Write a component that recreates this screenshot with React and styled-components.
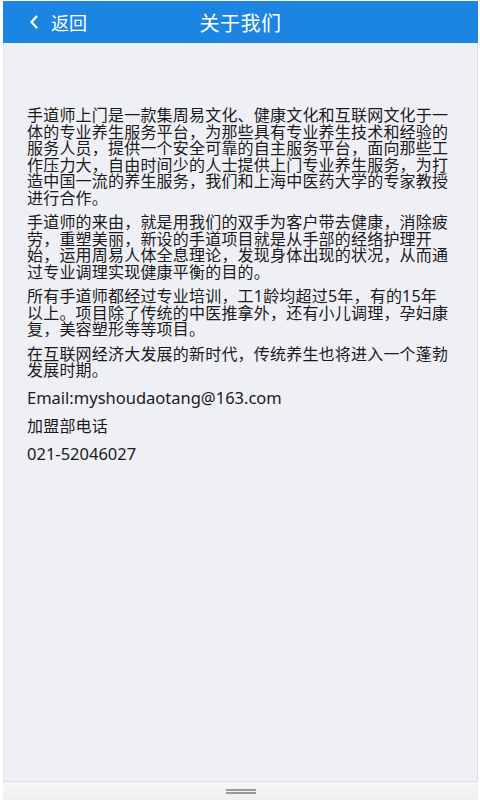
import styled, { createGlobalStyle } from "styled-components"

const GlobalStyle = createGlobalStyle`
  html, body {
    margin: 0;
    padding: 0;
    background: #ffffff;
  }
  body {
    font-family: "Noto Sans", "Noto Sans CJK SC", sans-serif;
  }
`
const Screen = styled.div`
  width: 480px;
  height: 800px;
  display: flex;
  flex-direction: column;
  padding: 1px 2px 0 3px;
  box-sizing: border-box;
  overflow: hidden;
`
const Header = styled.header`
  height: 42px;
  flex-shrink: 0;
  background: #1b85e1;
  display: grid;
  grid-template-columns: 1fr auto 1fr;
  align-items: center;
  color: #ffffff;
`
const BackButton = styled.button`
  justify-self: start;
  display: flex;
  align-items: center;
  gap: 12px;
  margin-left: 26px;
  padding: 0;
  border: none;
  background: none;
  color: inherit;
  font-family: "Noto Sans CJK SC", sans-serif;
  font-size: 18px;
  cursor: pointer;
`
const Title = styled.h1`
  margin: 0;
  font-family: "Noto Sans CJK SC", sans-serif;
  font-size: 20px;
  font-weight: 400;
  letter-spacing: 0.5px;
`
const Content = styled.main`
  flex: 1;
  background: #eff0f5;
  border-left: 1px solid #e2e3e8;
  border-right: 1px solid #dcdde2;
  border-bottom: 1px solid #dddee3;
  padding: 64px 28px 0 23px;
`
const Paragraph = styled.p`
  margin: 0 0 8px;
  font-size: 16px;
  line-height: 16.5px;
  letter-spacing: 0.2px;
  color: #1a1a1a;
`
const Info = styled.div`
  display: flex;
  flex-direction: column;
  gap: 6px;
`
const InfoLine = styled.p`
  margin: 0;
  font-size: ${(p) => p.$size || 16.5}px;
  line-height: 22px;
  letter-spacing: ${(p) => (p.$size ? "0.2px" : "0")};
  color: #1a1a1a;
`
const BottomBar = styled.div`
  height: 18px;
  flex-shrink: 0;
  background: linear-gradient(#f6f6f6, #efefef);
  display: flex;
  align-items: center;
  justify-content: center;
`
const Handle = styled.div`
  width: 30px;
  height: 5px;
  border-top: 2px solid #9a9a9a;
  border-bottom: 2px solid #9a9a9a;
  box-sizing: border-box;
  margin-top: 1px;
`

const paragraphs = [
  "手道师上门是一款集周易文化、健康文化和互联网文化于一体的专业养生服务平台，为那些具有专业养生技术和经验的服务人员，提供一个安全可靠的自主服务平台，面向那些工作压力大，自由时间少的人士提供上门专业养生服务，为打造中国一流的养生服务，我们和上海中医药大学的专家教授进行合作。",
  "手道师的来由，就是用我们的双手为客户带去健康，消除疲劳，重塑美丽，新设的手道项目就是从手部的经络护理开始，运用周易人体全息理论，发现身体出现的状况，从而通过专业调理实现健康平衡的目的。",
  "所有手道师都经过专业培训，工1龄均超过5年，有的15年以上。项目除了传统的中医推拿外，还有小儿调理，孕妇康复，美容塑形等等项目。",
  "在互联网经济大发展的新时代，传统养生也将进入一个蓬勃发展时期。",
]

const App = () => {
  return (
    <>
      <GlobalStyle />
      <Screen>
        <Header>
          <BackButton>
            <svg width="10" height="14" viewBox="0 0 10 14" fill="none">
              <path d="M7.5 1.5 L2.5 7 L7.5 12.5" stroke="#fff" strokeWidth="2.2" strokeLinecap="round" strokeLinejoin="round" />
            </svg>
            返回
          </BackButton>
          <Title>关于我们</Title>
          <div />
        </Header>
        <Content>
          {paragraphs.map((text) => (
            <Paragraph key={text.slice(0, 8)}>{text}</Paragraph>
          ))}
          <Info>
            <InfoLine>Email:myshoudaotang@163.com</InfoLine>
            <InfoLine $size={16}>加盟部电话</InfoLine>
            <InfoLine>021-52046027</InfoLine>
          </Info>
        </Content>
        <BottomBar>
          <Handle />
        </BottomBar>
      </Screen>
    </>
  )
}

export default App
